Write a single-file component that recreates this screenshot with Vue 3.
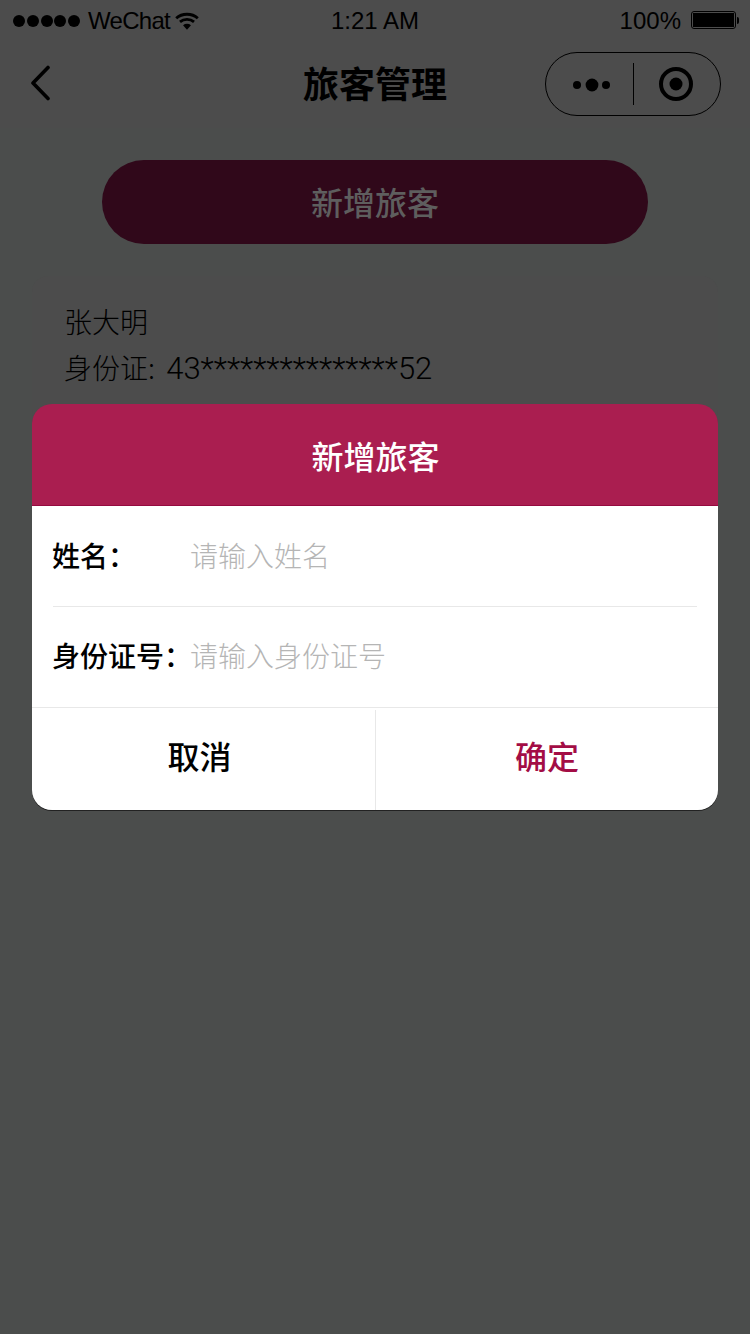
<script setup>
const fields = [
  { label: '姓名：', placeholder: '请输入姓名' },
  { label: '身份证号：', placeholder: '请输入身份证号' },
]
</script>

<template>
  <main class="page">
    <div class="status-bar">
      <div class="status-left">
        <span class="signal"><i v-for="n in 5" :key="n"></i></span>
        <span class="carrier">WeChat</span>
        <svg class="wifi" width="24" height="18" viewBox="0 0 26 20">
          <path d="M1 7C7.5 1 18.5 1 25 7" fill="none" stroke="#000" stroke-width="3.2" />
          <path d="M5.2 11c4.4-3.7 11.2-3.7 15.6 0" fill="none" stroke="#000" stroke-width="3.2" />
          <path d="M8.6 14.6c2.5-1.9 6.3-1.9 8.8 0L13 19.6z" fill="#000" />
        </svg>
      </div>
      <span class="time">1:21 AM</span>
      <div class="status-right">
        <span>100%</span>
        <span class="battery"><i></i></span>
        <span class="battery-tip"></span>
      </div>
    </div>

    <header class="nav">
      <svg class="back" width="24" height="36" viewBox="0 0 24 36">
        <path d="M20 2.5 5 18l15 15.5" fill="none" stroke="#000" stroke-width="3.6" stroke-linecap="round" stroke-linejoin="round" />
      </svg>
      <h1>旅客管理</h1>
      <div class="capsule">
        <div class="capsule-cell dots">
          <svg width="38" height="16" viewBox="0 0 38 16">
            <circle cx="4" cy="8" r="4" fill="#000" />
            <circle cx="19" cy="8" r="6.4" fill="#000" />
            <circle cx="33" cy="8" r="4" fill="#000" />
          </svg>
        </div>
        <span class="capsule-line"></span>
        <div class="capsule-cell target">
          <svg width="36" height="36" viewBox="0 0 36 36">
            <circle cx="18" cy="18" r="15" fill="none" stroke="#000" stroke-width="4" />
            <circle cx="18" cy="18" r="6.5" fill="#000" />
          </svg>
        </div>
      </div>
    </header>

    <div class="add-btn">新增旅客</div>

    <section class="card">
      <p class="name">张大明</p>
      <p class="id">身份证: <span class="num">43***************52</span></p>
    </section>

    <div class="modal">
      <div class="modal-title">新增旅客</div>
      <div class="form">
        <div class="field" v-for="f in fields" :key="f.label">
          <span class="label">{{ f.label }}</span>
          <span class="placeholder">{{ f.placeholder }}</span>
        </div>
      </div>
      <div class="actions">
        <div class="action cancel">取消</div>
        <div class="action confirm">确定</div>
      </div>
    </div>
  </main>
</template>

<style>
html, body {
  margin: 0;
  background: #4b4d4c;
}
</style>

<style scoped>
.page {
  position: relative;
  width: 750px;
  height: 1334px;
  overflow: hidden;
  background: #4b4d4c;
  font-family: "Noto Sans CJK SC", "Liberation Sans", sans-serif;
  color: #000;
}

.status-bar {
  height: 40px;
  box-sizing: border-box;
  padding: 1px 11px 0 13px;
  background: #4c4c4c;
  display: grid;
  grid-template-columns: 1fr auto 1fr;
  align-items: center;
  font-family: "Liberation Sans", sans-serif;
  font-size: 24px;
  color: #000;
}

.status-left {
  display: flex;
  align-items: center;
}

.signal {
  display: flex;
  gap: 1.75px;
  margin-right: 8px;
}

.signal i {
  width: 12px;
  height: 12px;
  border-radius: 50%;
  background: #000;
}

.carrier {
  letter-spacing: -0.7px;
}

.wifi {
  margin-left: 5px;
}

.time {
  padding-right: 2px;
}

.status-right {
  display: flex;
  align-items: center;
  justify-content: flex-end;
}

.battery {
  margin: 0 0 1px 10px;
  width: 45px;
  height: 18px;
  box-sizing: border-box;
  border: 1px solid #000;
  border-radius: 3px;
  padding: 1px;
  display: flex;
}

.battery i {
  flex: 1;
  background: #000;
}

.battery-tip {
  width: 2px;
  height: 7px;
  margin: 0 0 1px 1px;
  background: #000;
  border-radius: 0 2px 2px 0;
}

.nav {
  height: 88px;
  position: relative;
  background: #4c4c4c;
  display: flex;
  align-items: center;
  justify-content: center;
}

.back {
  position: absolute;
  left: 28px;
  top: 25px;
}

.nav h1 {
  margin: 0;
  font-size: 36px;
  font-weight: 700;
  line-height: 88px;
  transform: translateY(-2px);
}

.capsule {
  position: absolute;
  right: 29px;
  top: 12px;
  width: 176px;
  height: 64px;
  box-sizing: border-box;
  border: 1px solid #000;
  border-radius: 32px;
  display: flex;
  align-items: center;
}

.capsule-cell {
  box-sizing: border-box;
  display: flex;
  align-items: center;
  justify-content: center;
}

.dots {
  width: 87px;
  padding: 2px 0 0 4px;
}

.target {
  width: 86px;
  padding-right: 2px;
}

.capsule-line {
  width: 1px;
  height: 42px;
  background: #000;
}

.add-btn {
  width: 546px;
  height: 84px;
  margin: 32px auto 0;
  border-radius: 42px;
  background: #30081a;
  color: #5e5e5e;
  font-size: 32px;
  font-weight: 500;
  line-height: 82px;
  text-align: center;
}

.card {
  margin: 32px 32px 0;
  height: 150px;
  box-sizing: border-box;
  padding: 22px 32px;
  background: #4c4c4c;
  border-radius: 16px;
  font-size: 28px;
  font-weight: 300;
}

.card p {
  margin: 0;
  line-height: 46px;
}

.num {
  margin-left: 5px;
  font-family: Roboto, "Liberation Sans", sans-serif;
  font-size: 31px;
  font-weight: 300;
}

.modal {
  position: absolute;
  left: 32px;
  top: 404px;
  width: 686px;
  height: 406px;
  border-radius: 20px;
  overflow: hidden;
  box-shadow: 0 1px 0 #222;
}

.modal-title {
  height: 102px;
  box-sizing: border-box;
  border-bottom: 1px solid #950a3f;
  background: #aa1e50;
  color: #fff;
  font-size: 32px;
  font-weight: 500;
  line-height: 102px;
  text-align: center;
  padding-left: 1px;
}

.form {
  padding: 0 21px;
  background: #fff;
}

.field {
  height: 100px;
  display: flex;
  align-items: center;
  padding-bottom: 2px;
  box-sizing: border-box;
}

.field + .field {
  height: 101px;
  padding-bottom: 4px;
  border-top: 1px solid #e8e8e8;
}

.label {
  width: 138px;
  flex: none;
  margin-left: -1px;
  font-size: 28px;
  font-weight: 500;
  white-space: nowrap;
}

.placeholder {
  font-size: 28px;
  font-weight: 300;
  color: #b5b5b5;
}

.actions {
  height: 103px;
  border-top: 1px solid #e8e8e8;
  display: flex;
  padding-top: 2px;
  box-sizing: border-box;
  background: #fff;
}

.action {
  box-sizing: border-box;
  font-size: 32px;
  font-weight: 500;
  line-height: 90px;
  text-align: center;
}

.cancel {
  width: 344px;
  border-right: 1px solid #e8e8e8;
  padding-right: 8px;
}

.confirm {
  width: 342px;
  color: #a30d45;
}
</style>
